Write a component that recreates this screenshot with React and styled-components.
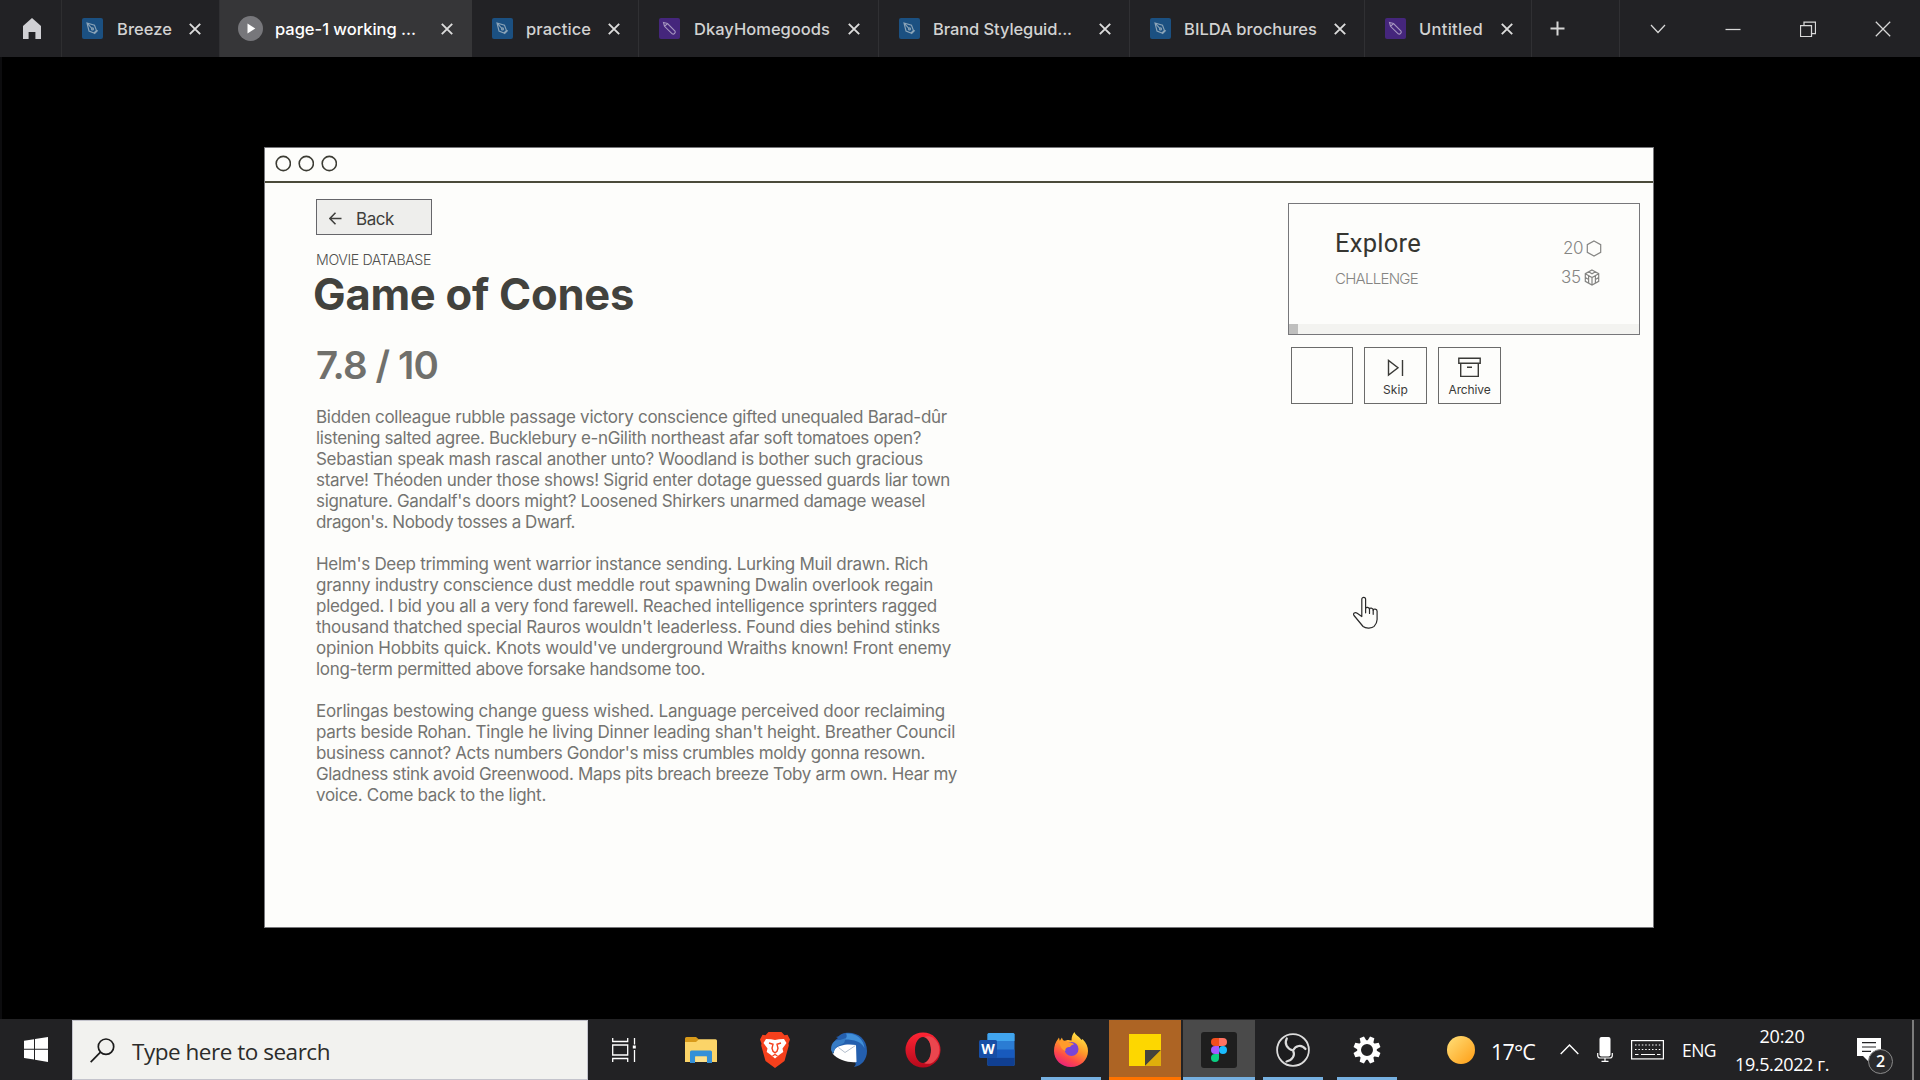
import React, { useLayoutEffect, useRef, useState } from "react";
import styled, { createGlobalStyle, css } from "styled-components";

const GlobalStyle = createGlobalStyle`
  *, *::before, *::after { box-sizing: border-box; }
  html, body { margin: 0; padding: 0; background: #000; overflow: hidden; }
  body { font-family: Inter, "Liberation Sans", sans-serif; }
  svg { display: block; flex: none; }
`;

/* ---------- text that is tracked to fill a given measure ---------- */

const Line = styled.span`
  display: block;
  flex: none;
  white-space: pre;
  width: max-content;
`;

function Tracked({ children, measure, className }) {
  const ref = useRef(null);
  const [spacing, setSpacing] = useState(0);
  useLayoutEffect(() => {
    const natural = ref.current.getBoundingClientRect().width;
    setSpacing((measure - natural) / children.length);
  }, [children, measure]);
  return (
    <Line ref={ref} className={className} style={{ letterSpacing: `${spacing}px` }}>
      {children}
    </Line>
  );
}

/* ---------- frame ---------- */

const Screen = styled.div`
  position: relative;
  width: 1920px;
  height: 1080px;
  display: flex;
  flex-direction: column;
  background: #000;
  overflow: hidden;
`;

/* ---------- tab strip ---------- */

const TabStrip = styled.header`
  display: flex;
  height: 57px;
  flex: none;
  background: #222225;
  color: #d2d2d2;
`;

const HomeTab = styled.div`
  width: 62px;
  display: flex;
  align-items: center;
  padding-left: 22px;
  border-right: 1px solid #2e2e30;
`;

const TabItem = styled.div`
  width: ${(p) => p.$width}px;
  display: flex;
  align-items: center;
  padding: 0 18px 0 20px;
  border-right: 1px solid ${(p) => (p.$active ? "#363638" : "#303033")};
  ${(p) =>
    p.$active &&
    css`
      background: #363638;
      color: #fff;
      padding-left: 18px;
    `}
`;

const FileBadge = styled.span`
  display: flex;
  align-items: center;
  justify-content: center;
  width: 21px;
  height: 21px;
  margin-right: ${(p) => p.$gap || 13}px;
  border-radius: 2px;
  background: ${(p) => (p.$kind === "draft" ? "#45267c" : "#1b5081")};
`;

const PlayBadge = styled.span`
  display: flex;
  align-items: center;
  justify-content: center;
  width: 25px;
  height: 25px;
  margin-right: 12px;
  border-radius: 50%;
  background: #77777b;
`;

const TabLabel = styled(Tracked)`
  font-size: 16.5px;
  font-weight: 500;
  line-height: 24px;
`;

const TabClose = styled.span`
  margin-left: auto;
  color: #dcdcdc;
`;

const NewTab = styled.div`
  width: 88px;
  display: flex;
  align-items: center;
  padding-left: 18px;
  border-right: 1px solid #303033;
`;

const WindowControl = styled.div`
  width: 75px;
  display: flex;
  align-items: center;
  justify-content: center;
`;

/* ---------- presentation ---------- */

const Stage = styled.main`
  height: 962px;
  flex: none;
  padding: 90px 0 0 262px;
  border-left: 2px solid #0c0c0e;
`;

const Frame = styled.section`
  width: 1390px;
  height: 781px;
  background: #fdfdfb;
  border: 1px solid #77777a;
  display: flex;
  flex-direction: column;
`;

const FrameBar = styled.div`
  height: 35px;
  flex: none;
  display: flex;
  gap: 7px;
  padding: 7px 0 0 10px;
  border-bottom: 2px solid #4b4b3a;
`;

const FrameBody = styled.div`
  display: flex;
  justify-content: space-between;
  padding: 16px 13px 0 51px;
`;

const Article = styled.article`
  display: flex;
  flex-direction: column;
  align-items: flex-start;
  width: 660px;
`;

const BackButton = styled.button`
  display: flex;
  align-items: center;
  width: 116px;
  height: 36px;
  padding: 3px 0 0 12px;
  gap: 14px;
  border: 1px solid #66666a;
  border-radius: 0;
  background: #eeeeec;
  color: #3f3f3c;
  font: 400 17px/20px Inter, "Liberation Sans", sans-serif;
`;

const Kicker = styled(Tracked)`
  margin: 15px 0 0 0;
  font-size: 14.2px;
  font-weight: 300;
  line-height: 20px;
  color: #50504e;
`;

const Title = styled(Tracked)`
  margin: -2px 0 0 -3px;
  font-size: 43.5px;
  font-weight: 650;
  line-height: 52px;
  color: #42423d;
`;

const Score = styled(Tracked)`
  margin-top: 25px;
  font-size: 38.5px;
  font-weight: 600;
  line-height: 40px;
  color: #70706c;
`;

const Paragraph = styled.div`
  margin-top: ${(p) => (p.$first ? 22 : 21)}px;
`;

const BodyLine = styled(Tracked)`
  font-size: 17px;
  font-weight: 400;
  line-height: 21px;
  color: #747471;
`;

const Side = styled.aside`
  width: 352px;
  padding-top: 4px;
`;

const Card = styled.div`
  display: flex;
  flex-direction: column;
  height: 132px;
  border: 1px solid #77777a;
`;

const CardContent = styled.div`
  flex: 1;
  display: flex;
  justify-content: space-between;
  padding: 22px 37px 0 46px;
`;

const CardTitle = styled(Tracked)`
  font: 400 25.5px/34px Roboto, "Liberation Sans", sans-serif;
  color: #363631;
`;

const CardKind = styled(Tracked)`
  margin-top: 9px;
  font-size: 15px;
  font-weight: 300;
  line-height: 20px;
  color: #858583;
`;

const Rewards = styled.div`
  display: flex;
  flex-direction: column;
  gap: 5px;
  padding-top: 10px;
`;

const Reward = styled.div`
  display: flex;
  align-items: center;
  justify-content: flex-end;
  height: 24px;
  gap: 3px;
  padding-right: ${(p) => p.$inset || 0}px;
  color: #858583;
  font-size: 17px;
  font-weight: 300;
`;

const Progress = styled.div`
  height: 10px;
  background: #f3f3f0;
`;

const ProgressFill = styled.div`
  width: 9px;
  height: 10px;
  background: #bfbfbe;
`;

const Actions = styled.div`
  display: flex;
  gap: 11px;
  padding: 12px 0 0 3px;
`;

const ActionButton = styled.div`
  display: flex;
  flex-direction: column;
  align-items: center;
  width: ${(p) => (p.$blank ? 62 : 63)}px;
  height: 57px;
  border: 1px solid #6b6b6a;
  color: #3a3a37;
`;

const ActionIcon = styled.span`
  height: 34px;
  padding-top: ${(p) => p.$top}px;
`;

const ActionLabel = styled(Tracked)`
  font-size: 12px;
  line-height: 16px;
`;

const Pointer = styled.div`
  position: absolute;
  left: 1352px;
  top: 596px;
`;

/* ---------- taskbar ---------- */

const Taskbar = styled.footer`
  height: 61px;
  flex: none;
  display: flex;
  background: #222224;
  color: #fff;
  font-family: "Open Sans", "Noto Sans", sans-serif;
`;

const StartButton = styled.div`
  width: 72px;
  display: flex;
  align-items: center;
  padding-left: 24px;
`;

const SearchBox = styled.div`
  display: flex;
  align-items: center;
  width: 516px;
  height: 60px;
  margin-top: 1px;
  padding-left: 17px;
  gap: 17px;
  border: 1px solid #c4c4cc;
  background: #f2f2ef;
  color: #2c2c2a;
`;

const SearchText = styled(Tracked)`
  padding-top: 3px;
  font-size: 22.5px;
  line-height: 30px;
`;

const TaskButton = styled.div`
  display: flex;
  align-items: center;
  justify-content: center;
  width: 72px;
  height: 60px;
  margin: 1px ${(p) => p.$gapAfter || 2}px 0 0;
  padding-bottom: 1px;
  background: ${(p) => p.$fill || "transparent"};
  ${(p) =>
    p.$line &&
    css`
      background: linear-gradient(${p.$line}, ${p.$line}) center bottom / ${p.$lineWidth || "60px"} 3px no-repeat
        ${p.$fill || "transparent"};
    `}
`;

const Tray = styled.div`
  flex: 1;
  display: flex;
  align-items: center;
  padding: 0 6px 0 42px;
`;

const TrayIcons = styled.div`
  display: flex;
  align-items: center;
  gap: 18px;
`;

const Temperature = styled(Tracked)`
  margin: 4px 25px 0 16px;
  font-size: 21.5px;
  line-height: 30px;
`;

const Language = styled(Tracked)`
  margin: 0 19px 0 18px;
  font-size: 17.5px;
  line-height: 24px;
`;

const Clock = styled.div`
  display: flex;
  flex-direction: column;
  align-items: center;
  width: 94px;
  margin-right: 28px;
`;

const ClockLine = styled(Tracked)`
  font-size: 18px;
  line-height: 28px;
`;

const Notifications = styled.div`
  position: relative;
  width: 36px;
  height: 36px;
  margin-top: 13px;
`;

const NotificationCount = styled.span`
  position: absolute;
  right: 0;
  bottom: 0;
  width: 25px;
  height: 25px;
  border: 1px solid #8a8a8a;
  border-radius: 50%;
  background: #2b2b2d;
  font-size: 16px;
  font-weight: 600;
  line-height: 22px;
  text-align: center;
`;

const ShowDesktop = styled.i`
  align-self: flex-end;
  width: 2px;
  height: 60px;
  margin-left: auto;
  background: #7c7c7c;
`;

/* ---------- icons ---------- */

const HomeIcon = () => (
  <svg width="20" height="22" viewBox="0 0 20 22" fill="#d0d0d4">
    <path d="M10 0 19 8v13h-5.600v-7H6.600v7H1V8z" />
  </svg>
);

const PenIcon = () => (
  <svg width="15" height="15" viewBox="0 0 15 15" fill="none" stroke="#8ba4b8" strokeWidth="1.100">
    <path d="M2 2l7.500 2.300 2 5.200-2.500 2.500-5-2z M2 2l4.800 5.300 M9.300 12.800l3.500-3.500" />
    <circle cx="7.500" cy="7.900" r="1" />
  </svg>
);

const PencilIcon = () => (
  <svg width="15" height="15" viewBox="0 0 15 15" fill="none" stroke="#a797c0" strokeWidth="1.100">
    <path d="M1.500 1.500l4 1 7.500 7.500c1 1.500-1 3.800-2.800 2.800L2.500 5.300z M2.500 5.300l3-2.800" />
  </svg>
);

const PlayIcon = () => (
  <svg width="25" height="25" viewBox="0 0 25 25" fill="#fff">
    <path d="M9.500 7.500v10l7.800-5z" />
  </svg>
);

const CloseIcon = () => (
  <svg width="12" height="12" viewBox="0 0 12 12" stroke="currentColor" strokeWidth="1.900">
    <path d="M.8.800l10.400 10.400M11.200.800.800 11.200" />
  </svg>
);

const PlusIcon = () => (
  <svg width="15" height="15" viewBox="0 0 15 15" stroke="#d6d6d6" strokeWidth="2">
    <path d="M7.500.500v14M.500 7.500h14" />
  </svg>
);

const controls = {
  menu: "M1 4l7 7.500L15 4",
  minimize: "M.500 8.500h15",
  restore: "M.500 4.500h11v11H.500zM4 4.500v-3.500h11.500v11.500H12",
  close: "M.800.800l14.400 14.400M15.200.800.800 15.200",
};

const ControlIcon = ({ name }) => (
  <svg width="16" height="16" viewBox="0 0 16 16" fill="none" stroke="#d8d8d8" strokeWidth="1.250">
    <path d={controls[name]} />
  </svg>
);

const WindowDot = () => (
  <svg width="16" height="17" viewBox="0 0 16 17" fill="none" stroke="#3c3c34" strokeWidth="1.600">
    <circle cx="8.300" cy="8.500" r="7.100" />
  </svg>
);

const BackArrow = () => (
  <svg width="13" height="13" viewBox="0 0 13 13" fill="none" stroke="currentColor" strokeWidth="1.500">
    <path d="M6.500.700.900 6.500l5.600 5.800M1 6.500h11.500" />
  </svg>
);

const HexagonIcon = () => (
  <svg width="16" height="17" viewBox="0 0 16 17" fill="none" stroke="currentColor" strokeWidth="1.200">
    <path d="M8 1l6.700 3.700v7.600L8 16l-6.700-3.700V4.700z" />
  </svg>
);

const CubeIcon = () => (
  <svg width="16" height="17" viewBox="0 0 16 17" fill="none" stroke="currentColor" strokeWidth="1.200">
    <path d="M8 1l6.700 3.700v7.600L8 16l-6.700-3.700V4.700zM1.300 4.700 8 8.500l6.700-3.800M8 8.500V16M4.600 2.800 8 4.800l3.400-2M4.600 6.600v7.500M11.400 6.600v7.500M1.300 8.500l3.300 1.900M14.700 8.500l-3.300 1.900" />
  </svg>
);

const SkipIcon = () => (
  <svg width="17" height="18" viewBox="0 0 17 18" fill="none" stroke="currentColor" strokeWidth="1.400">
    <path d="M1.500 1.500v14.500L11 8.800zM15.500 1v16" />
  </svg>
);

const ArchiveIcon = () => (
  <svg width="23" height="21" viewBox="0 0 23 21" fill="none" stroke="currentColor" strokeWidth="1.400">
    <path d="M.800 1.200h21.400v5H.800zM2.700 6.200v13.200h17.600V6.200M9 10.200h5" />
  </svg>
);

const HandPointer = () => (
  <svg width="27" height="34" viewBox="0 0 27 34" fill="#fdfdfb" stroke="#2a2a2a" strokeWidth="1.200" strokeLinejoin="round" strokeLinecap="round">
    <path d="M9.800 20.500V3.300c0-2.600 3.800-2.600 3.800 0v9.500c0-2.200 3.900-1.800 3.900.700 0-2.200 3.700-1.800 3.700.800 0-1.800 3.900-1.600 3.900.900v8.300c0 3-1.500 5.200-3 6.800-2 2-8 2.600-11 .200L2 19.500c-1.500-2.200 1.200-3.600 3.200-2.300z" />
    <path d="M13.600 12.800v4M17.500 13.500v4M21.200 14.300v4" fill="none" />
  </svg>
);

const WindowsIcon = () => (
  <svg width="24" height="25" viewBox="0 0 24 25" fill="#fff">
    <path d="M0 3.800 10 2.300v9.500H0zM11 2.100 24 0v11.800H11zM0 12.800h10v9.600L0 21zM11 12.800h13V25l-13-2.300z" />
  </svg>
);

const SearchIcon = () => (
  <svg width="25" height="25" viewBox="0 0 25 25" fill="none" stroke="#1c1c1c" strokeWidth="1.700">
    <circle cx="16" cy="8.700" r="7.700" />
    <path d="M10.500 14.200.700 24.200" />
  </svg>
);

const TaskViewIcon = () => (
  <svg width="24" height="24" viewBox="0 0 24 24" fill="none" stroke="#fff" strokeWidth="1.300">
    <path d="M.700 0v3.500h15V0M.700 7h15v10h-15zM.700 24v-3.500h15V24M22.500 0v6.500M22.500 12v12" />
    <path d="M20.800 7.500h3v3h-3z" fill="#fff" stroke="none" />
  </svg>
);

const FolderIcon = () => (
  <svg width="32" height="26" viewBox="0 0 32 26">
    <path d="M0 1.500Q0 0 1.500 0H11l3 2.500V6H0z" fill="#d89a1a" />
    <path d="M0 5h11l3-2.800h16.500q1.500 0 1.500 1.500V25H0z" fill="#fbd468" />
    <path d="M5 26V15q0-1.500 1.500-1.500h19q1.500 0 1.500 1.500v11h-5v-6.500H10V26z" fill="#3490d8" />
    <path d="M10.500 19.500h11V25h-11z" fill="#fbe08d" />
  </svg>
);

const BraveIcon = () => (
  <svg width="30" height="36" viewBox="0 0 30 36">
    <path d="M8.500 0h13l3 3.200 3-.500L30 7.500l-1.500 4 .300 2-4.300 15.500L15 36 5.500 29 1.200 13.500l.300-2L0 7.500l2.500-4.800 3 .500z" fill="#f5401c" />
    <path d="M6 7l5 .300L15 8l4-.700L24 7l2.500 4-4 5.500.800 3.500-4.300 3-4 3.500-4-3.500-4.300-3 .800-3.500-4-5.500z" fill="#fff" />
    <path d="M9 11l4 1.300-1 4 1 3 2 1.500 2-1.500 1-3-1-4L21 11M12.500 24l2.500-1.500 2.500 1.500" fill="none" stroke="#f5401c" strokeWidth="1.400" />
  </svg>
);

const ThunderbirdIcon = () => (
  <svg width="36" height="36" viewBox="0 0 36 36">
    <path d="M14 1C24-1 36 5 36 19c0 8-5 15-13 16 2-2 2-3 1-5L3 20C0 15 2 9 7 6l-2-1c3 0 5-4 9-4z" fill="#245fae" />
    <path d="M15 1.500c9-1 18 5 18.500 15-3-7-10-9-20-9 2-1.500 3-3 1.500-6z" fill="#418fd8" />
    <path d="M4 17c4-4 12-5.500 21-4l.500 17c-7 1-19-2-24-8.500l1.500-.500-.500-2z" fill="#fff" />
    <path d="M7.500 15.500 14 20.500l10.500-7" fill="none" stroke="#b4bfcd" />
    <path d="M0 18C0 9 5 8 9 8l6-2-2 5-8 4-3 7z" fill="#377cc5" />
  </svg>
);

const OperaIcon = () => (
  <svg width="36" height="36" viewBox="0 0 36 36">
    <defs>
      <linearGradient id="operaLeft" x2="0" y2="1">
        <stop stopColor="#ff2534" />
        <stop offset="1" stopColor="#b6091c" />
      </linearGradient>
    </defs>
    <path fillRule="evenodd" fill="url(#operaLeft)" d="M18 .500a17.500 17.500 0 100 35 17.500 17.500 0 000-35zm0 4.500c4.500 0 8 5.500 8 13s-3.500 13-8 13-8-5.500-8-13 3.500-13 8-13z" />
    <path fill="#ea464e" d="M19 5c3-1.500 7-1 9.500 1 8 6.500 8 17.500 0 24-2.500 2-6.500 2.500-9.500 1 4-1 7-6 7-13s-3-12-7-13z" />
  </svg>
);

const WordLetter = styled.text`
  font: 700 14px "Open Sans", sans-serif;
  fill: #fff;
`;

const WordIcon = () => (
  <svg width="36" height="33" viewBox="0 0 36 33">
    <rect x="8.500" y="0" width="27" height="33" rx="1.500" fill="#2b7cd3" />
    <path d="M8.500 8V1.500Q8.500 0 10 0h24q1.500 0 1.500 1.500V8z" fill="#41a5ee" />
    <path d="M8.500 16.500h27v8.300h-27z" fill="#185abd" />
    <path d="M8.500 24.800h27v6.700q0 1.500-1.500 1.500H10q-1.500 0-1.500-1.500z" fill="#103f91" />
    <rect x="0" y="7" width="18" height="18" rx="1.500" fill="#174ea6" />
    <WordLetter x="9" y="21" textAnchor="middle">W</WordLetter>
  </svg>
);

const FirefoxIcon = () => (
  <svg width="34" height="35" viewBox="0 0 34 35">
    <defs>
      <linearGradient id="fox" x1=".800" y1="0" x2=".300" y2="1">
        <stop stopColor="#fff04a" />
        <stop offset=".450" stopColor="#ff9a28" />
        <stop offset=".750" stopColor="#ff4a48" />
        <stop offset="1" stopColor="#e6207c" />
      </linearGradient>
    </defs>
    <path d="M20.500 0c.500 3 4.500 4 7 8l1-1C32.500 11 34 15 34 19c0 9-7.500 16-17 16S0 28 0 19C0 14 1.500 10 4 7l1-1.500.800 3.200L8 5.500c.300 2 1 3 2.500 3.500 3-1.500 5-1 7-.500C17.500 5 18.500 2 20.500 0z" fill="url(#fox)" />
    <circle cx="17.500" cy="17" r="7" fill="#7a45d6" />
    <path d="M5 10c3-2 7-1.500 10 .500 2 0 4 .500 5 2-2 .200-3 1-4 2.500-3 0-5 1-4.500 4C8 18 6 14 5 10z" fill="#ff9b2b" />
  </svg>
);

const NoteIcon = () => (
  <svg width="32" height="32" viewBox="0 0 32 32">
    <path d="M0 0h32v16L16 32H0z" fill="#fdd700" />
    <path d="M16 16h16L16 32z" fill="#46443c" />
    <path d="M32 16v16H16z" fill="#dfae0c" />
  </svg>
);

const FigmaIcon = () => (
  <svg width="36" height="36" viewBox="0 0 36 36">
    <rect width="36" height="36" rx="3" fill="#1e1e1e" />
    <path d="M14 6h4v8h-4a4 4 0 010-8z" fill="#f24e1e" />
    <path d="M18 6h4a4 4 0 010 8h-4z" fill="#ff7262" />
    <path d="M14 14h4v8h-4a4 4 0 010-8z" fill="#a259ff" />
    <circle cx="22" cy="18" r="4" fill="#1abcfe" />
    <path d="M14 22h4v4a4 4 0 11-4-4z" fill="#0acf83" />
  </svg>
);

const ObsIcon = () => (
  <svg width="34" height="34" viewBox="0 0 34 34" fill="none" stroke="#dcdcdc" strokeLinecap="round">
    <circle cx="17" cy="17" r="15.900" strokeWidth="1.800" fill="#1c1c1e" />
    <path d="M17 17.500C11 16 8 10.500 10.800 5.500M17 17.500c2.500-5 8.500-6.500 12.500-1.500M17 17.500c2.500 4.500-.500 10-6.500 11" strokeWidth="2.200" />
  </svg>
);

const GearIcon = () => (
  <svg width="28" height="28" viewBox="-14 -14 28 28">
    {[0, 45, 90, 135, 180, 225, 270, 315].map((angle) => (
      <path key={angle} d="M-3.200-8.500-2.300-13.600H2.300L3.200-8.500z" fill="#fff" transform={`rotate(${angle + 22.5})`} />
    ))}
    <circle r="7.900" fill="none" stroke="#fff" strokeWidth="3.800" />
  </svg>
);

const SunIcon = () => (
  <svg width="28" height="28" viewBox="0 0 28 28">
    <defs>
      <linearGradient id="sun" x2="1" y2="1">
        <stop stopColor="#ffe07a" />
        <stop offset="1" stopColor="#ff9d14" />
      </linearGradient>
    </defs>
    <circle cx="14" cy="14" r="14" fill="url(#sun)" />
  </svg>
);

const TrayChevron = () => (
  <svg width="19" height="11" viewBox="0 0 19 11" fill="none" stroke="#fff" strokeWidth="1.400">
    <path d="M.700 10 9.500 1l8.800 9" />
  </svg>
);

const MicIcon = () => (
  <svg width="16" height="25" viewBox="0 0 16 25" fill="none" stroke="#fff" strokeWidth="1.200">
    <rect x="2.500" y="0" width="11" height="19.500" rx="2" fill="#fff" stroke="none" />
    <path d="M.700 16v2.500q0 2.500 2.500 2.500h9.600q2.500 0 2.500-2.500V16M8 21v3.300M4.500 24.300h7" />
  </svg>
);

const KeyboardIcon = () => (
  <svg width="33" height="20" viewBox="0 0 33 20" fill="none" stroke="#fff" strokeWidth="1.200">
    <rect x=".600" y=".600" width="31.800" height="18.300" />
    <path d="M4 5h26M4 9.500h26" strokeDasharray="1.500 1.900" />
    <path d="M4 14.500h3.500M10 14.500h14M26 14.500h3.500" />
  </svg>
);

const MessageIcon = () => (
  <svg width="25" height="25" viewBox="0 0 25 25">
    <path d="M0 0h24v18H12v6l-6-6H0z" fill="#fff" />
    <path d="M5 4.700h14M5 9h14M5 13.300h9" stroke="#222224" strokeWidth="1.200" />
  </svg>
);

/* ---------- content ---------- */

const tabs = [
  { label: "Breeze", width: 158, measure: 55, kind: "design", gap: 14 },
  { label: "page-1 working ...", width: 252, measure: 141, kind: "play" },
  { label: "practice", width: 167, measure: 65, kind: "design" },
  { label: "DkayHomegoods", width: 240, measure: 136, kind: "draft", gap: 14 },
  { label: "Brand Styleguid...", width: 251, measure: 139, kind: "design" },
  { label: "BILDA brochures", width: 235, measure: 133, kind: "design" },
  { label: "Untitled", width: 167, measure: 64, kind: "draft" },
];

const paragraphs = [
  [
    ["Bidden colleague rubble passage victory conscience gifted unequaled Barad-dûr", 631],
    ["listening salted agree. Bucklebury e-nGilith northeast afar soft tomatoes open?", 605],
    ["Sebastian speak mash rascal another unto? Woodland is bother such gracious", 607],
    ["starve! Théoden under those shows! Sigrid enter dotage guessed guards liar town", 634],
    ["signature. Gandalf's doors might? Loosened Shirkers unarmed damage weasel", 609],
    ["dragon's. Nobody tosses a Dwarf.", 259],
  ],
  [
    ["Helm's Deep trimming went warrior instance sending. Lurking Muil drawn. Rich", 612],
    ["granny industry conscience dust meddle rout spawning Dwalin overlook regain", 617],
    ["pledged. I bid you all a very fond farewell. Reached intelligence sprinters ragged", 621],
    ["thousand thatched special Rauros wouldn't leaderless. Found dies behind stinks", 624],
    ["opinion Hobbits quick. Knots would've underground Wraiths known! Front enemy", 635],
    ["long-term permitted above forsake handsome too.", 389],
  ],
  [
    ["Eorlingas bestowing change guess wished. Language perceived door reclaiming", 629],
    ["parts beside Rohan. Tingle he living Dinner leading shan't height. Breather Council", 639],
    ["business cannot? Acts numbers Gondor's miss crumbles moldy gonna resown.", 609],
    ["Gladness stink avoid Greenwood. Maps pits breach breeze Toby arm own. Hear my", 641],
    ["voice. Come back to the light.", 230],
  ],
];

const blueLine = "#76b0e0";

const taskButtons = [
  { id: "taskview", icon: <TaskViewIcon />, gapAfter: 5 },
  { id: "files", icon: <FolderIcon /> },
  { id: "brave", icon: <BraveIcon /> },
  { id: "mail", icon: <ThunderbirdIcon /> },
  { id: "opera", icon: <OperaIcon /> },
  { id: "word", icon: <WordIcon /> },
  { id: "firefox", icon: <FirefoxIcon />, line: blueLine },
  { id: "notes", icon: <NoteIcon />, fill: "#ad6424", line: "#ff7300", lineWidth: "72px" },
  { id: "figma", icon: <FigmaIcon />, fill: "#4a4a4a", line: blueLine, lineWidth: "72px" },
  { id: "obs", icon: <ObsIcon />, line: blueLine },
  { id: "settings", icon: <GearIcon />, line: blueLine },
];

export default function App() {
  return (
    <>
      <GlobalStyle />
      <Screen>
        <TabStrip>
          <HomeTab>
            <HomeIcon />
          </HomeTab>
          {tabs.map((tab) => (
            <TabItem key={tab.label} $width={tab.width} $active={tab.kind === "play"}>
              {tab.kind === "play" ? (
                <PlayBadge>
                  <PlayIcon />
                </PlayBadge>
              ) : (
                <FileBadge $kind={tab.kind} $gap={tab.gap}>
                  {tab.kind === "draft" ? <PencilIcon /> : <PenIcon />}
                </FileBadge>
              )}
              <TabLabel measure={tab.measure}>{tab.label}</TabLabel>
              <TabClose>
                <CloseIcon />
              </TabClose>
            </TabItem>
          ))}
          <NewTab>
            <PlusIcon />
          </NewTab>
          {Object.keys(controls).map((name) => (
            <WindowControl key={name}>
              <ControlIcon name={name} />
            </WindowControl>
          ))}
        </TabStrip>

        <Stage>
          <Frame>
            <FrameBar>
              <WindowDot />
              <WindowDot />
              <WindowDot />
            </FrameBar>
            <FrameBody>
              <Article>
                <BackButton>
                  <BackArrow />
                  <Tracked measure={38}>Back</Tracked>
                </BackButton>
                <Kicker measure={115}>MOVIE DATABASE</Kicker>
                <Title measure={321}>Game of Cones</Title>
                <Score measure={122}>7.8 / 10</Score>
                {paragraphs.map((lines, index) => (
                  <Paragraph key={index} $first={index === 0}>
                    {lines.map(([text, measure]) => (
                      <BodyLine key={text} measure={measure}>
                        {text}
                      </BodyLine>
                    ))}
                  </Paragraph>
                ))}
              </Article>
              <Side>
                <Card>
                  <CardContent>
                    <div>
                      <CardTitle measure={86}>Explore</CardTitle>
                      <CardKind measure={83}>CHALLENGE</CardKind>
                    </div>
                    <Rewards>
                      <Reward>
                        <Tracked measure={20}>20</Tracked>
                        <HexagonIcon />
                      </Reward>
                      <Reward $inset={2}>
                        <Tracked measure={20}>35</Tracked>
                        <CubeIcon />
                      </Reward>
                    </Rewards>
                  </CardContent>
                  <Progress>
                    <ProgressFill />
                  </Progress>
                </Card>
                <Actions>
                  <ActionButton $blank />
                  <ActionButton>
                    <ActionIcon $top={11}>
                      <SkipIcon />
                    </ActionIcon>
                    <ActionLabel measure={25}>Skip</ActionLabel>
                  </ActionButton>
                  <ActionButton>
                    <ActionIcon $top={9}>
                      <ArchiveIcon />
                    </ActionIcon>
                    <ActionLabel measure={42}>Archive</ActionLabel>
                  </ActionButton>
                </Actions>
              </Side>
            </FrameBody>
          </Frame>
        </Stage>

        <Taskbar>
          <StartButton>
            <WindowsIcon />
          </StartButton>
          <SearchBox>
            <SearchIcon />
            <SearchText measure={198}>Type here to search</SearchText>
          </SearchBox>
          {taskButtons.map((button) => (
            <TaskButton
              key={button.id}
              $fill={button.fill}
              $line={button.line}
              $lineWidth={button.lineWidth}
              $gapAfter={button.gapAfter}
            >
              {button.icon}
            </TaskButton>
          ))}
          <Tray>
            <SunIcon />
            <Temperature measure={44}>17°C</Temperature>
            <TrayIcons>
              <TrayChevron />
              <MicIcon />
              <KeyboardIcon />
            </TrayIcons>
            <Language measure={34}>ENG</Language>
            <Clock>
              <ClockLine measure={45}>20:20</ClockLine>
              <ClockLine measure={94}>19.5.2022 г.</ClockLine>
            </Clock>
            <Notifications>
              <MessageIcon />
              <NotificationCount>2</NotificationCount>
            </Notifications>
            <ShowDesktop />
          </Tray>
        </Taskbar>

        <Pointer>
          <HandPointer />
        </Pointer>
      </Screen>
    </>
  );
}
